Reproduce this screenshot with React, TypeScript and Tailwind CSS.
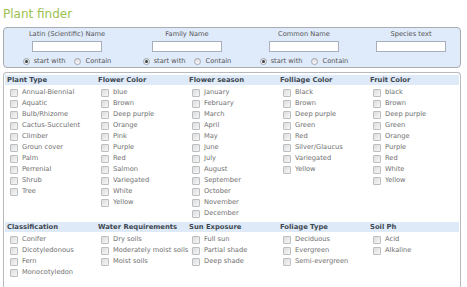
const font = { fontFamily: '"DejaVu Sans", Verdana, sans-serif' };

const topSections = [
  ["Plant Type", ["Annual-Biennial", "Aquatic", "Bulb/Rhizome", "Cactus-Succulent", "Climber", "Groun cover", "Palm", "Perrenial", "Shrub", "Tree"]],
  ["Flower Color", ["blue", "Brown", "Deep purple", "Orange", "Pink", "Purple", "Red", "Salmon", "Variegated", "White", "Yellow"]],
  ["Flower season", ["January", "February", "March", "April", "May", "June", "July", "August", "September", "October", "November", "December"]],
  ["Folliage Color", ["Black", "Brown", "Deep purple", "Green", "Red", "Silver/Glaucus", "Variegated", "Yellow"]],
  ["Fruit Color", ["black", "Brown", "Deep purple", "Green", "Orange", "Purple", "Red", "White", "Yellow"]]
] as const;

const bottomSections = [
  ["Classification", ["Conifer", "Dicotyledonous", "Fern", "Monocotyledon"]],
  ["Water Requirements", ["Dry soils", "Moderately moist soils", "Moist soils"]],
  ["Sun Exposure", ["Full sun", "Partial shade", "Deep shade"]],
  ["Foliage Type", ["Deciduous", "Evergreen", "Semi-evergreen"]],
  ["Soil Ph", ["Acid", "Alkaline"]]
] as const;

const searchFields = [
  ["Latin (Scientific) Name", true],
  ["Family Name", true],
  ["Common Name", true],
  ["Species text", false]
] as const;

function Radio({ checked }: { checked?: boolean }) {
  return (
    <span className="flex h-[7px] w-[7px] shrink-0 items-center justify-center rounded-full border border-[#a4a8ad] bg-gradient-to-b from-[#d8dadc] to-[#fbfbfb]">
      {checked && <span className="h-[3px] w-[3px] rounded-full bg-[#3a3f44]" />}
    </span>
  );
}

function Checkbox() {
  return <span className="h-[8px] w-[8px] shrink-0 rounded-[1px] border border-[#bcbec0] bg-gradient-to-br from-[#dcdddf] to-[#f7f7f7]" />;
}

function SectionRow({ sections }: { sections: readonly (readonly [string, readonly string[]])[] }) {
  return (
    <div>
      <div className="grid h-[10px] grid-cols-[91px_91px_91px_90px_1fr] items-center bg-[#dfeaf8] pl-[2px] text-[6.8px] font-bold leading-[10px] text-[#3d4852]">
        {sections.map(([title]) => (
          <div className="whitespace-nowrap" key={title}>{title}</div>
        ))}
      </div>
      <div className="mt-[2px] grid grid-cols-[91px_91px_91px_90px_1fr] pl-[2px]">
        {sections.map(([title, items]) => (
          <div key={title}>
            {items.map((item) => (
              <div className="flex h-[11px] items-center gap-[4px] pl-[3px] text-[6.7px] whitespace-nowrap text-[#707070]" key={item}>
                <Checkbox />
                {item}
              </div>
            ))}
          </div>
        ))}
      </div>
    </div>
  );
}

export default function App() {
  return (
    <div className="h-[287px] w-[467px] overflow-hidden bg-white" style={font}>
      <div className="ml-[3px] w-[458px]">
        <h1 className="h-[27px] pt-[6px] text-[12px] leading-[16px] font-normal text-[#9cc24f]">Plant finder</h1>
        <div className="h-[41px] rounded-[4px] border border-[#a9adb2] bg-[#dfeafa] pl-[3px] pt-[2px]">
          <div className="grid grid-cols-[120px_120px_114px_100px]">
            {searchFields.map(([label, radios]) => (
              <div className="flex flex-col items-center" key={label}>
                <div className="h-[9px] text-[6.7px] leading-[9px] whitespace-nowrap text-[#555555]">{label}</div>
                <div className="mt-[2px] h-[11px] w-[70px] border border-[#a7b0ba] bg-white" />
                {radios && (
                  <div className="mt-[5px] flex h-[9px] items-center text-[6.7px] whitespace-nowrap text-[#555555]">
                    <Radio checked />
                    <span className="ml-[4px]">start with</span>
                    <span className="ml-[8px]"><Radio /></span>
                    <span className="ml-[5px]">Contain</span>
                  </div>
                )}
              </div>
            ))}
          </div>
        </div>
        <div className="mt-[4px] h-[215px] rounded-t-[4px] border border-b-0 border-[#b7bbbf] px-[1px] pt-[2px]">
          <SectionRow sections={topSections} />
          <div className="mt-[3px]">
            <SectionRow sections={bottomSections} />
          </div>
        </div>
      </div>
    </div>
  );
}
